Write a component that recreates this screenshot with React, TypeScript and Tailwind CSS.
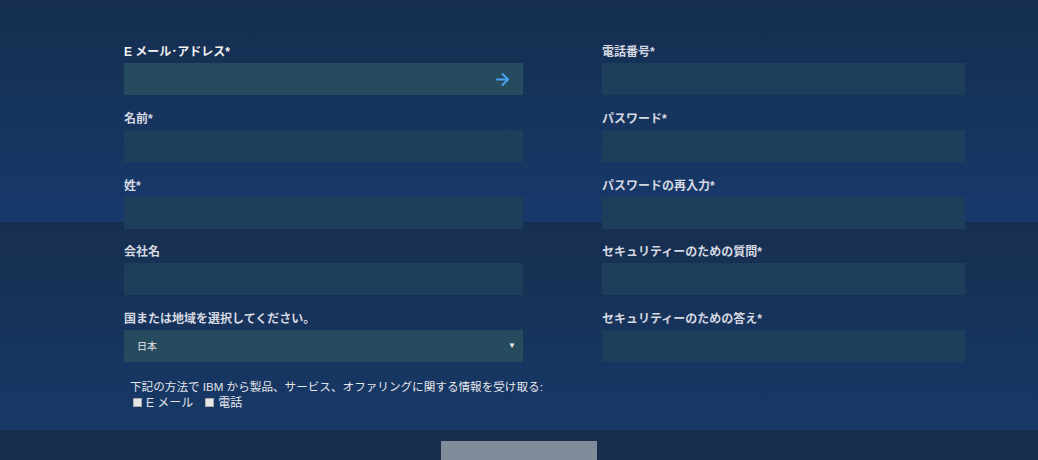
import { ArrowRight } from "lucide-react";

const font = "font-['Liberation_Sans','Noto_Sans_CJK_JP',sans-serif]";

const Field = ({
  label,
  tint = false,
  icon = false,
  white = false,
}: {
  label: string;
  tint?: boolean;
  icon?: boolean;
  white?: boolean;
}) => (
  <div className="flex flex-col">
    <label
      className={`h-[14px] leading-[14px] mb-[4px] text-[12px] font-bold ${
        white ? "text-[#f2f2f2]" : "text-[#d6d9e2]"
      }`}
    >
      {label}
    </label>
    <div
      className={`h-[32px] flex items-center justify-end pr-[11px] ${
        tint ? "bg-[#264a5e]" : "bg-[#1f3e5c]"
      }`}
    >
      {icon && <ArrowRight size={19} strokeWidth={2.4} className="text-[#4ba3f0]" />}
    </div>
  </div>
);

export default function App() {
  return (
    <div
      className={`${font} w-[1038px] h-[460px] overflow-hidden bg-[linear-gradient(180deg,#152e4e_0px,#17396b_222px,#172f4f_222px,#173868_430px,#172e4c_430px)]`}
    >
      <div className="flex pl-[124px] pt-[45px] gap-[79px]">
        {/* left column */}
        <div className="w-[399px] flex flex-col gap-[16.75px]">
          <Field label="E メール･アドレス*" tint icon white />
          <Field label="名前*" />
          <Field label="姓*" />
          <Field label="会社名" />
          <div className="flex flex-col">
            <label className="h-[14px] leading-[14px] mb-[4px] text-[12px] font-bold text-[#d6d9e2]">
              国または地域を選択してください。
            </label>
            <div className="h-[32px] bg-[#264a5e] flex items-center justify-between pl-[13px] pr-[7px]">
              <span className="text-[10px] text-[#e8e8e8]">日本</span>
              <span className="text-[8px] text-[#f0f0f0]">▼</span>
            </div>
          </div>
          <div className="pl-[6px] text-[11.6px] leading-[16px] text-[#e4e6ec]">
            <p className="whitespace-nowrap">
              下記の方法で IBM から製品、サービス、オファリングに関する情報を受け取る:
            </p>
            <div className="flex items-center gap-[12px] pl-[3px] text-[12px]">
              <span className="flex items-center gap-[4px]">
                <span className="w-[9px] h-[9px] bg-[#e6e6e6] border border-[#aaa]" />
                E メール
              </span>
              <span className="flex items-center gap-[4px]">
                <span className="w-[9px] h-[9px] bg-[#e6e6e6] border border-[#aaa]" />
                電話
              </span>
            </div>
          </div>
        </div>

        {/* right column */}
        <div className="w-[363px] flex flex-col gap-[16.75px]">
          <Field label="電話番号*" />
          <Field label="パスワード*" />
          <Field label="パスワードの再入力*" />
          <Field label="セキュリティーのための質問*" />
          <Field label="セキュリティーのための答え*" />
        </div>
      </div>

      <div className="flex justify-center pt-[30px]">
        <button className="w-[156px] h-[40px] bg-[#818c9b]" />
      </div>
    </div>
  );
}
